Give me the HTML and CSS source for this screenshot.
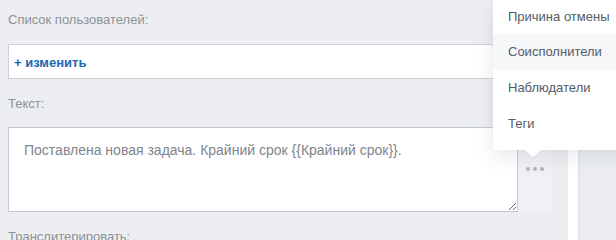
FILE: index.html
```html
<!DOCTYPE html>
<html lang="ru">
<head>
<meta charset="utf-8">
<link rel="stylesheet" href="styles.css">
</head>
<body>
<div class="layout">
  <main class="main">
    <div class="label">Список пользователей:</div>
    <div class="users-box"><span class="add-link">+ изменить</span></div>
    <div class="label label-text">Текст:</div>
    <div class="text-row">
      <textarea class="text-area" readonly>Поставлена новая задача. Крайний срок {{Крайний срок}}.</textarea>
      <div class="dots-col"><span class="dots"><i></i><i></i><i></i></span></div>
    </div>
    <div class="label label-translit">Транслитерировать:</div>
  </main>
  <div class="strip"></div>
  <aside class="side"></aside>
</div>
<div class="menu">
  <div class="menu-item">Причина отмены</div>
  <div class="menu-item is-hover">Соисполнители</div>
  <div class="menu-item">Наблюдатели</div>
  <div class="menu-item">Теги</div>
  <span class="menu-arrow"></span>
</div>
</body>
</html>
```
FILE: styles.css
```css
html, body {
  margin: 0;
  padding: 0;
  height: 100%;
  overflow: hidden;
  font-family: "Liberation Sans", Arial, sans-serif;
}
.layout {
  display: grid;
  grid-template-columns: 568px 10px 1fr;
  height: 240px;
}
.main {
  background: #eceef1;
  padding: 12px 0 0 8px;
}
.strip { background: #ffffff; }
.side {
  background: #eceef1;
  border-left: 2px solid #e2e5e9;
}
.label {
  font-size: 13px;
  line-height: 16px;
  color: #8d9198;
}
.users-box {
  margin-top: 16px;
  height: 33px;
  background: #fff;
  border: 1px solid #cdd1d6;
  display: flex;
  align-items: center;
  padding-left: 5px;
  width: 503px;
}
.add-link {
  font-size: 13px;
  font-weight: bold;
  color: #2067b0;
  position: relative;
  top: 1px;
}
.label-text { margin-top: 17px; }
.text-row {
  display: flex;
  margin-top: 15px;
}
.text-area {
  flex: none;
  width: 510px;
  height: 85px;
  box-sizing: border-box;
  margin: 0;
  border: 1px solid #c6cacf;
  padding: 13px 15px;
  font-family: "Liberation Sans", Arial, sans-serif;
  font-size: 14px;
  line-height: 18px;
  color: #80858c;
  background: #fff;
  outline: none;
  resize: both;
}
.dots-col {
  width: 34px;
  background: #f0f1f4;
  display: flex;
  justify-content: center;
  padding-top: 40px;
  box-sizing: border-box;
}
.dots {
  display: flex;
  gap: 3px;
  height: 4px;
}
.dots i {
  width: 4px;
  height: 4px;
  border-radius: 50%;
  background: #b2b6bc;
}
.label-translit { margin-top: 17px; }
.menu {
  position: absolute;
  left: 493px;
  top: 0;
  width: 140px;
  padding: 0 0 8px;
  background: #fff;
  box-shadow: 0 7px 21px rgba(83, 92, 105, 0.12), 0 -1px 6px rgba(83, 92, 105, 0.06);
}
.menu-item {
  height: 36px;
  line-height: 36px;
  padding-left: 15px;
  font-size: 13px;
  color: #535c69;
  white-space: nowrap;
}
.menu-item:first-child {
  height: 34px;
  line-height: 34px;
}
.menu-item.is-hover { background: #f6f7f9; }
.menu-arrow {
  position: absolute;
  left: 32px;
  bottom: -7px;
  width: 0;
  height: 0;
  border-left: 8px solid transparent;
  border-right: 8px solid transparent;
  border-top: 7px solid #fff;
}
```
